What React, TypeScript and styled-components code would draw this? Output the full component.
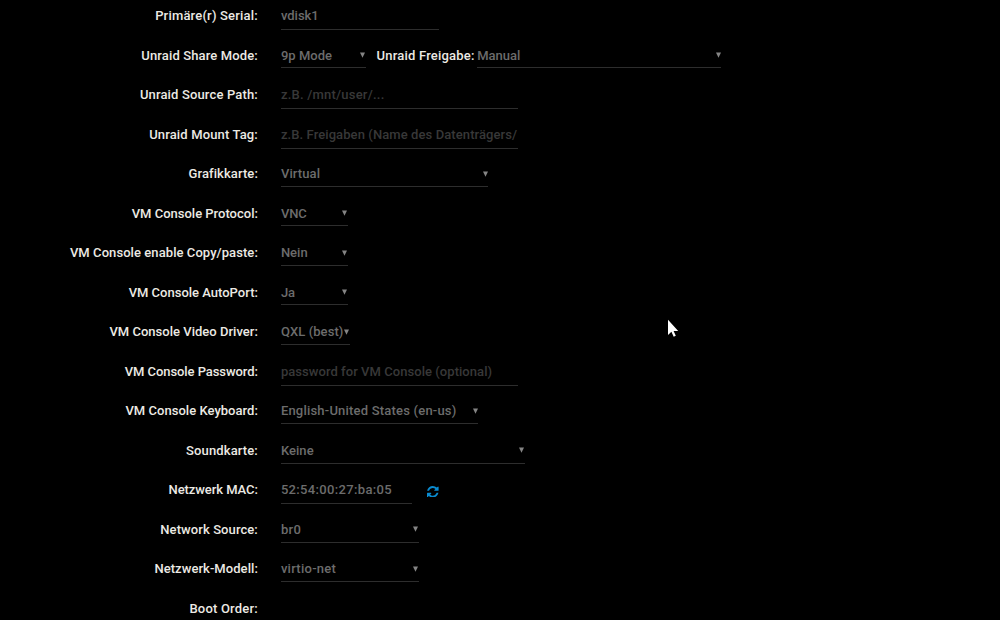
import React from "react";
import styled, { createGlobalStyle } from "styled-components";

const GlobalStyle = createGlobalStyle`
  body {
    margin: 0;
    background: #000;
    overflow: hidden;
    font: 500 13px/20px Roboto, "Liberation Sans", sans-serif;
  }
`;

const Page = styled.main`
  position: relative;
  height: 620px;
  overflow: hidden;
  background: #000;
`;

const Form = styled.form`
  display: grid;
  grid-auto-rows: 39.53px;
  margin: -3.7px 0 0;
`;

const Row = styled.div`
  display: grid;
  grid-template-columns: 257.9px 1fr;
  column-gap: 23px;
  align-items: center;
`;

const Label = styled.label<{ $track?: number }>`
  color: #eceae4;
  letter-spacing: ${(p) => p.$track ?? 0}px;
  text-align: right;
  white-space: pre;
`;

const Controls = styled.div`
  display: flex;
  align-items: flex-start;
  height: 20px;
`;

const Field = styled.div<{ $width: number; $track?: number; $hint?: boolean; $input?: boolean }>`
  display: flex;
  align-items: flex-start;
  justify-content: space-between;
  box-sizing: border-box;
  flex: none;
  width: ${(p) => p.$width}px;
  height: ${(p) => (p.$input ? 24.1 : 22.8)}px;
  padding-right: 0.7px;
  border-bottom: 1px solid #2d2d2d;
  color: ${(p) => (p.$hint ? "#383838" : "#6c6c6c")};
  letter-spacing: ${(p) => p.$track ?? 0.2}px;
  white-space: pre;
`;

const Arrow = styled.svg`
  flex: none;
  width: 5px;
  height: 6px;
  margin-top: 6.6px;
  fill: #858585;
`;

const InlineLabel = styled(Label)`
  margin: 0 2.6px 0 10.7px;
`;

const Refresh = styled.svg`
  width: 11.6px;
  height: 11.6px;
  margin: 5.4px 0 0 15.2px;
  fill: #0a8bd0;
`;

const Pointer = styled.svg`
  position: absolute;
  left: 667px;
  top: 319px;
  width: 12px;
  height: 19px;
`;

type FieldSpec = { text: string; width: number; track?: number; hint?: boolean; input?: boolean };
type RowSpec = {
  label: string;
  track?: number;
  field?: FieldSpec;
  refresh?: boolean;
  extra?: { label: string; track: number; field: FieldSpec };
};

const rows: RowSpec[] = [
  { label: "Primäre(r) Serial:", track: 0.19, field: { text: "vdisk1", width: 158, track: 0, input: true } },
  {
    label: "Unraid Share Mode:",
    track: 0.13,
    field: { text: "9p Mode", width: 85, track: 0.02 },
    extra: { label: "Unraid Freigabe:", track: 0.2, field: { text: "Manual", width: 244, track: 0 } },
  },
  { label: "Unraid Source Path:", track: 0.15, field: { text: "z.B. /mnt/user/...", width: 237, track: 0.22, hint: true, input: true } },
  { label: "Unraid Mount Tag:", track: 0.14, field: { text: "z.B. Freigaben (Name des Datenträgers/", width: 237, track: 0.09, hint: true, input: true } },
  { label: "Grafikkarte:", track: 0.08, field: { text: "Virtual", width: 207.3, track: 0.1 } },
  { label: "VM Console Protocol:", field: { text: "VNC", width: 67, track: -0.1 } },
  { label: "VM Console enable Copy/paste:", track: 0.07, field: { text: "Nein", width: 67, track: 0 } },
  { label: "VM Console AutoPort:", field: { text: "Ja", width: 67, track: 0 } },
  { label: "VM Console Video Driver:", track: 0.02, field: { text: "QXL (best)", width: 69, track: 0.08 } },
  { label: "VM Console Password:", track: -0.07, field: { text: "password for VM Console (optional)", width: 237, track: 0.05, hint: true, input: true } },
  { label: "VM Console Keyboard:", track: 0.03, field: { text: "English-United States (en-us)", width: 197.5, track: 0.2 } },
  { label: "Soundkarte:", track: 0.12, field: { text: "Keine", width: 244, track: 0.05 } },
  { label: "Netzwerk MAC:", track: -0.06, field: { text: "52:54:00:27:ba:05", width: 131.3, track: 0.34, input: true }, refresh: true },
  { label: "Network Source:", track: 0.09, field: { text: "br0", width: 138, track: 0.4 } },
  { label: "Netzwerk-Modell:", track: 0.06, field: { text: "virtio-net", width: 138, track: 0.26 } },
  { label: "Boot Order:", track: 0.2 },
];

function Control({ text, width, track, hint, input }: FieldSpec) {
  return (
    <Field $width={width} $track={track} $hint={hint} $input={input}>
      <span>{text}</span>
      {!input && (
        <Arrow viewBox="0 0 5 6">
          <path d="M0 .5h5L2.5 5.8Z" />
        </Arrow>
      )}
    </Field>
  );
}

export default function App() {
  return (
    <Page>
      <GlobalStyle />
      <Form>
        {rows.map((row) => (
          <Row key={row.label}>
            <Label $track={row.track}>{row.label}</Label>
            <Controls>
              {row.field && <Control {...row.field} />}
              {row.extra && (
                <>
                  <InlineLabel $track={row.extra.track}>{row.extra.label}</InlineLabel>
                  <Control {...row.extra.field} />
                </>
              )}
              {row.refresh && (
                <Refresh viewBox="0 0 1536 1536">
                  <path d="M1511 928q0 5-1 7-64 268-268 434.5t-478 166.5q-146 0-282.5-55t-243.5-157l-129 129q-19 19-45 19t-45-19-19-45v-448q0-26 19-45t45-19h448q26 0 45 19t19 45-19 45l-137 137q71 66 161 102t187 36q134 0 250-65t186-179q11-17 53-117 8-23 30-23h192q13 0 22.5 9.5t9.5 22.5zm25-800v448q0 26-19 45t-45 19h-448q-26 0-45-19t-19-45 19-45l138-138q-148-137-349-137-134 0-250 65t-186 179q-11 17-53 117-8 23-30 23h-199q-13 0-22.5-9.5t-9.5-22.5v-7q65-268 270-434.5t480-166.5q146 0 284 55.5t245 156.5l130-129q19-19 45-19t45 19 19 45z" />
                </Refresh>
              )}
            </Controls>
          </Row>
        ))}
      </Form>
      <Pointer viewBox="0 0 12 19">
        <path d="M1 .8v15.2l3.4-3.2 2.3 4.9 2.1-1-2.2-4.7h4.6Z" fill="#fff" />
      </Pointer>
    </Page>
  );
}
